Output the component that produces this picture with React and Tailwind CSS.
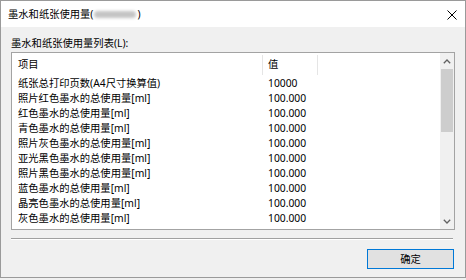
import React from "react";

const rows = [
  ["纸张总打印页数(A4尺寸换算值)", "10000"],
  ["照片红色墨水的总使用量[ml]", "100.000"],
  ["红色墨水的总使用量[ml]", "100.000"],
  ["青色墨水的总使用量[ml]", "100.000"],
  ["照片灰色墨水的总使用量[ml]", "100.000"],
  ["亚光黑色墨水的总使用量[ml]", "100.000"],
  ["照片黑色墨水的总使用量[ml]", "100.000"],
  ["蓝色墨水的总使用量[ml]", "100.000"],
  ["晶亮色墨水的总使用量[ml]", "100.000"],
  ["灰色墨水的总使用量[ml]", "100.000"],
];

const font = { fontFamily: '"Noto Sans", "Noto Sans CJK SC", sans-serif' };

export default function App() {
  return (
    <div
      className="w-[466px] h-[280px] bg-[#f0f0f0] overflow-hidden text-[10.3px] text-black"
      style={font}
    >
      <div className="w-[466px] h-[278px] border border-[#9a9a9a] flex flex-col bg-[#f0f0f0]">
        {/* Title bar */}
        <div className="h-[26px] bg-white flex items-center pl-[7px] pr-[7px] shrink-0">
          <span className="leading-[14px]">墨水和纸张使用量(</span>
          <span className="inline-block w-[42px] h-[7px] bg-[#c4c4c4] rounded-full blur-[1.5px] mx-[1px]"></span>
          <span className="leading-[14px]">)</span>
          <div className="flex-1"></div>
          <svg width="10" height="10" viewBox="0 0 10 10" className="mr-[1px] mt-[1px]">
            <path d="M0.5 0.5 L9.5 9.5 M9.5 0.5 L0.5 9.5" stroke="#000" strokeWidth="1" />
          </svg>
        </div>

        {/* Body */}
        <div className="flex-1 flex flex-col pl-[10px]">
          <div className="mt-[9px] leading-[14px] h-[16px]">墨水和纸张使用量列表(L):</div>

          {/* List view */}
          <div className="w-[444px] h-[178px] border border-[#a3a3a3] bg-white flex overflow-hidden">
            <div className="flex-1 flex flex-col overflow-hidden">
              <div className="h-[23px] flex shrink-0">
                <div className="w-[250px] pl-[6px] flex items-center">项目</div>
                <div className="w-px h-[20px] mt-[2px] bg-[#e5e5e5]"></div>
                <div className="w-[54px] pl-[5px] flex items-center">值</div>
                <div className="w-px h-[20px] mt-[2px] bg-[#e5e5e5]"></div>
              </div>
              {rows.map(([k, v], i) => (
                <div key={i} className="h-[15px] flex shrink-0 leading-[15px]">
                  <div className="w-[251px] pl-[6px] whitespace-nowrap">{k}</div>
                  <div className="pl-[5px] whitespace-nowrap">{v}</div>
                </div>
              ))}
            </div>
            {/* Scrollbar */}
            <div className="w-[14px] bg-[#f0f0f0] flex flex-col">
              <div className="h-[16px] flex items-center justify-center">
                <svg width="8" height="5" viewBox="0 0 8 5">
                  <path d="M0.8 4.2 L4 1 L7.2 4.2" stroke="#606060" strokeWidth="1.3" fill="none" />
                </svg>
              </div>
              <div className="h-[63px] mx-[1px] bg-[#cdcdcd]"></div>
              <div className="flex-1"></div>
              <div className="h-[16px] flex items-center justify-center">
                <svg width="8" height="5" viewBox="0 0 8 5">
                  <path d="M0.8 0.8 L4 4 L7.2 0.8" stroke="#606060" strokeWidth="1.3" fill="none" />
                </svg>
              </div>
            </div>
          </div>

          {/* Separator */}
          <div className="mt-[8px] w-[442px] h-px bg-[#a0a0a0]"></div>
          <div className="w-[442px] h-px bg-white"></div>

          {/* Button row */}
          <div className="w-[444px] flex justify-end mt-[9px]">
            <div className="w-[87px] h-[20px] border border-[#0078d7] bg-[#e1e1e1] flex items-center justify-center leading-[14px] mr-[1px]">
              确定
            </div>
          </div>
        </div>
      </div>
    </div>
  );
}
